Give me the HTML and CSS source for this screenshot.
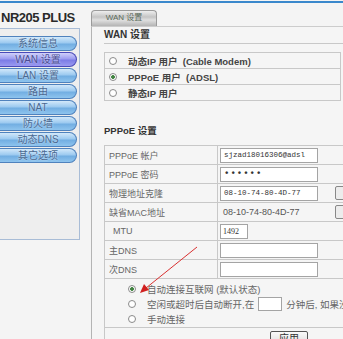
FILE: index.html
```html
<!DOCTYPE html>
<html>
<head>
    <meta charset="utf-8">
    <title>NR205 PLUS</title>
    <link rel="stylesheet" href="styles.css">
</head>
<body>
    <div class="topline"></div>
    <div class="layout">
        <div class="side">
            <div class="brand">NR205 PLUS</div>
            <div class="menu">
                <a>系统信息</a>
                <a class="on">WAN 设置</a>
                <a>LAN 设置</a>
                <a>路由</a>
                <a>NAT</a>
                <a>防火墙</a>
                <a>动态DNS</a>
                <a>其它选项</a>
            </div>
        </div>
        <div class="main">
            <div class="tab">WAN 设置</div>
            <div class="panel">
                <div class="h">WAN 设置</div>
                <div class="modes">
                    <div class="mode"><span class="radio"></span>动态IP 用户&nbsp; (Cable Modem)</div>
                    <div class="mode"><span class="radio checked"></span>PPPoE 用户&nbsp; (ADSL)</div>
                    <div class="mode"><span class="radio"></span>静态IP 用户</div>
                </div>
                <div class="h2">PPPoE 设置</div>
                <table class="form">
                    <tr><td class="lbl">PPPoE 帐户</td><td><input class="txt" type="text" value="sjzad18016306@adsl"></td></tr>
                    <tr><td class="lbl">PPPoE 密码</td><td><input class="txt pwd" type="password" value="123456"></td></tr>
                    <tr><td class="lbl">物理地址克隆</td><td><input class="txt" type="text" value="08-10-74-80-4D-77"><span class="sbtn"></span></td></tr>
                    <tr><td class="lbl">缺省MAC地址</td><td><span class="mac">08-10-74-80-4D-77</span><span class="sbtn"></span></td></tr>
                    <tr><td class="lbl mtu">MTU</td><td><input class="txt short" type="text" value="1492"></td></tr>
                    <tr><td class="lbl">主DNS</td><td><input class="txt" type="text" value=""></td></tr>
                    <tr><td class="lbl">次DNS</td><td><input class="txt" type="text" value=""></td></tr>
                    <tr>
                        <td class="opts" colspan="2">
                            <div class="opt"><span class="radio checked"></span>自动连接互联网 (默认状态)</div>
                            <div class="opt"><span class="radio"></span>空闲或超时后自动断开,在 <input class="mins" type="text"> 分钟后, 如果没有访问</div>
                            <div class="opt"><span class="radio"></span>手动连接</div>
                        </td>
                    </tr>
                    <tr><td class="act" colspan="2"><span class="apply">应用</span></td></tr>
                </table>
            </div>
        </div>
    </div>
    <svg class="arrow" width="343" height="339" viewBox="0 0 343 339">
        <line x1="197" y1="247" x2="146" y2="288" stroke="#d83030" stroke-width="1"/>
        <polygon points="140,293 144,284 149,290" fill="#d02020"/>
    </svg>
</body>
</html>
```
FILE: styles.css
```css
*{
    padding: 0;
    margin: 0;
    box-sizing: border-box;
}
body{
    width: 343px;
    height: 339px;
    overflow: hidden;
    position: relative;
    background: #f4f4f4;
    font-family: "Liberation Sans", "Noto Sans CJK SC", sans-serif;
    font-size: 10px;
    color: #555;
}
.topline{
    height: 2px;
    margin-top: 1px;
    background: #3a88cc;
}
.layout{
    display: flex;
}
.side{
    width: 91px;
    flex: none;
}
.brand{
    height: 25px;
    padding-top: 8px;
    padding-left: 1px;
    line-height: 14px;
    font-size: 13px;
    font-weight: bold;
    letter-spacing: -0.5px;
    color: #2a2a2a;
}
.menu{
    width: 80px;
    height: 212px;
    padding-top: 7px;
    border: 1px solid #a8bcd6;
    border-left: none;
    background: #eeeeee;
}
.menu a{
    display: block;
    width: 77px;
    height: 15px;
    margin-bottom: 1px;
    border: 1px solid #4f82bd;
    border-left: none;
    border-radius: 0 8px 8px 0;
    background: linear-gradient(#d2e8fa, #9ccaf0 45%, #72aee2 55%, #8ec4ee);
    text-align: center;
    line-height: 13px;
    font-size: 10px;
    color: #4a6890;
    text-shadow: 0 0 2px #e8f4ff;
}
.menu a.on{
    border-color: #4a4ab8;
    background: linear-gradient(#d0d0fa, #9c9cf0 45%, #7c7ce6 55%, #9a9af0);
    color: #4a4a90;
}
.main{
    flex: 1;
    padding-top: 7px;
}
.tab{
    width: 66px;
    height: 16px;
    border: 1px solid #9a9a9a;
    border-bottom: none;
    border-radius: 4px 4px 0 0;
    background: linear-gradient(#eeeeee, #c4c4c4 40%, #e0e0e0 60%, #b4b4b4);
    text-align: center;
    line-height: 14px;
    font-size: 8px;
    color: #5a6a5a;
}
.panel{
    width: 270px;
    height: 320px;
    padding-left: 12px;
    border-left: 1px solid #b4b4b4;
    border-top: 1px solid #cccccc;
    background: #f5f5f5;
}
.h{
    width: 260px;
    height: 17px;
    line-height: 16px;
    border-bottom: 1px solid #c8c8c8;
    font-size: 10px;
    font-weight: bold;
    color: #333;
}
.modes{
    width: 237px;
    margin-top: 8px;
    border: 1px solid #c8c8c8;
    border-bottom: none;
}
.mode{
    display: flex;
    align-items: center;
    height: 16px;
    border-bottom: 1px solid #c8c8c8;
    font-size: 9.5px;
    font-weight: bold;
    color: #444;
}
.radio{
    display: inline-block;
    flex: none;
    width: 8px;
    height: 8px;
    margin-left: 4px;
    margin-right: 11px;
    border: 1px solid #8a8a8a;
    border-radius: 50%;
    background: #fff;
}
.radio.checked{
    background: radial-gradient(circle, #3a7a3a 0, #4a8a4a 1.6px, #fff 2.2px);
}
.h2{
    height: 16px;
    margin-top: 22px;
    line-height: 16px;
    font-size: 9.5px;
    font-weight: bold;
    color: #333;
}
.form{
    width: 270px;
    margin-top: 6px;
    border-collapse: collapse;
}
.form td{
    height: 19px;
    padding: 0 2px;
    border: 1px solid #c8c8c8;
    white-space: nowrap;
}
.form td.lbl{
    width: 113px;
    padding-left: 4px;
    font-size: 9px;
    color: #666;
}
.form td.mtu{
    padding-left: 8px;
}
.txt{
    width: 98px;
    height: 15px;
    padding-left: 3px;
    border: 1px solid #a4a4a4;
    background: #fff;
    vertical-align: middle;
    font-family: "Liberation Mono", monospace;
    font-size: 7.5px;
    color: #333;
}
.txt.pwd{
    font-size: 9px;
    font-weight: bold;
    letter-spacing: 1px;
}
.txt.short{
    width: 28px;
    padding-left: 2px;
    font-family: "Liberation Serif", serif;
    font-size: 8px;
}
.mac{
    display: inline-block;
    width: 115px;
    padding-left: 3px;
    font-size: 9px;
    color: #555;
}
.sbtn{
    display: inline-block;
    width: 14px;
    height: 14px;
    margin-left: 17px;
    border: 1px solid #888;
    border-radius: 2px;
    background: #ececec;
    vertical-align: middle;
}
.mac + .sbtn{
    margin-left: 0;
}
.form td.opts{
    height: 49px;
    padding: 2px 0 0 19px;
    vertical-align: top;
}
.opt{
    display: flex;
    align-items: center;
    height: 15px;
    font-size: 9.5px;
    color: #666;
}
.mins{
    width: 24px;
    height: 14px;
    margin: 0 4px;
    border: 1px solid #a4a4a4;
    background: #fff;
}
.form td.act{
    padding-top: 3px;
    padding-left: 165px;
    vertical-align: top;
}
.apply{
    display: inline-block;
    width: 38px;
    height: 15px;
    border: 1px solid #555;
    border-radius: 2px;
    background: linear-gradient(#fafafa, #dcdcdc);
    text-align: center;
    line-height: 13px;
    font-size: 10px;
    color: #333;
}
.arrow{
    position: absolute;
    left: 0;
    top: 0;
}
```
